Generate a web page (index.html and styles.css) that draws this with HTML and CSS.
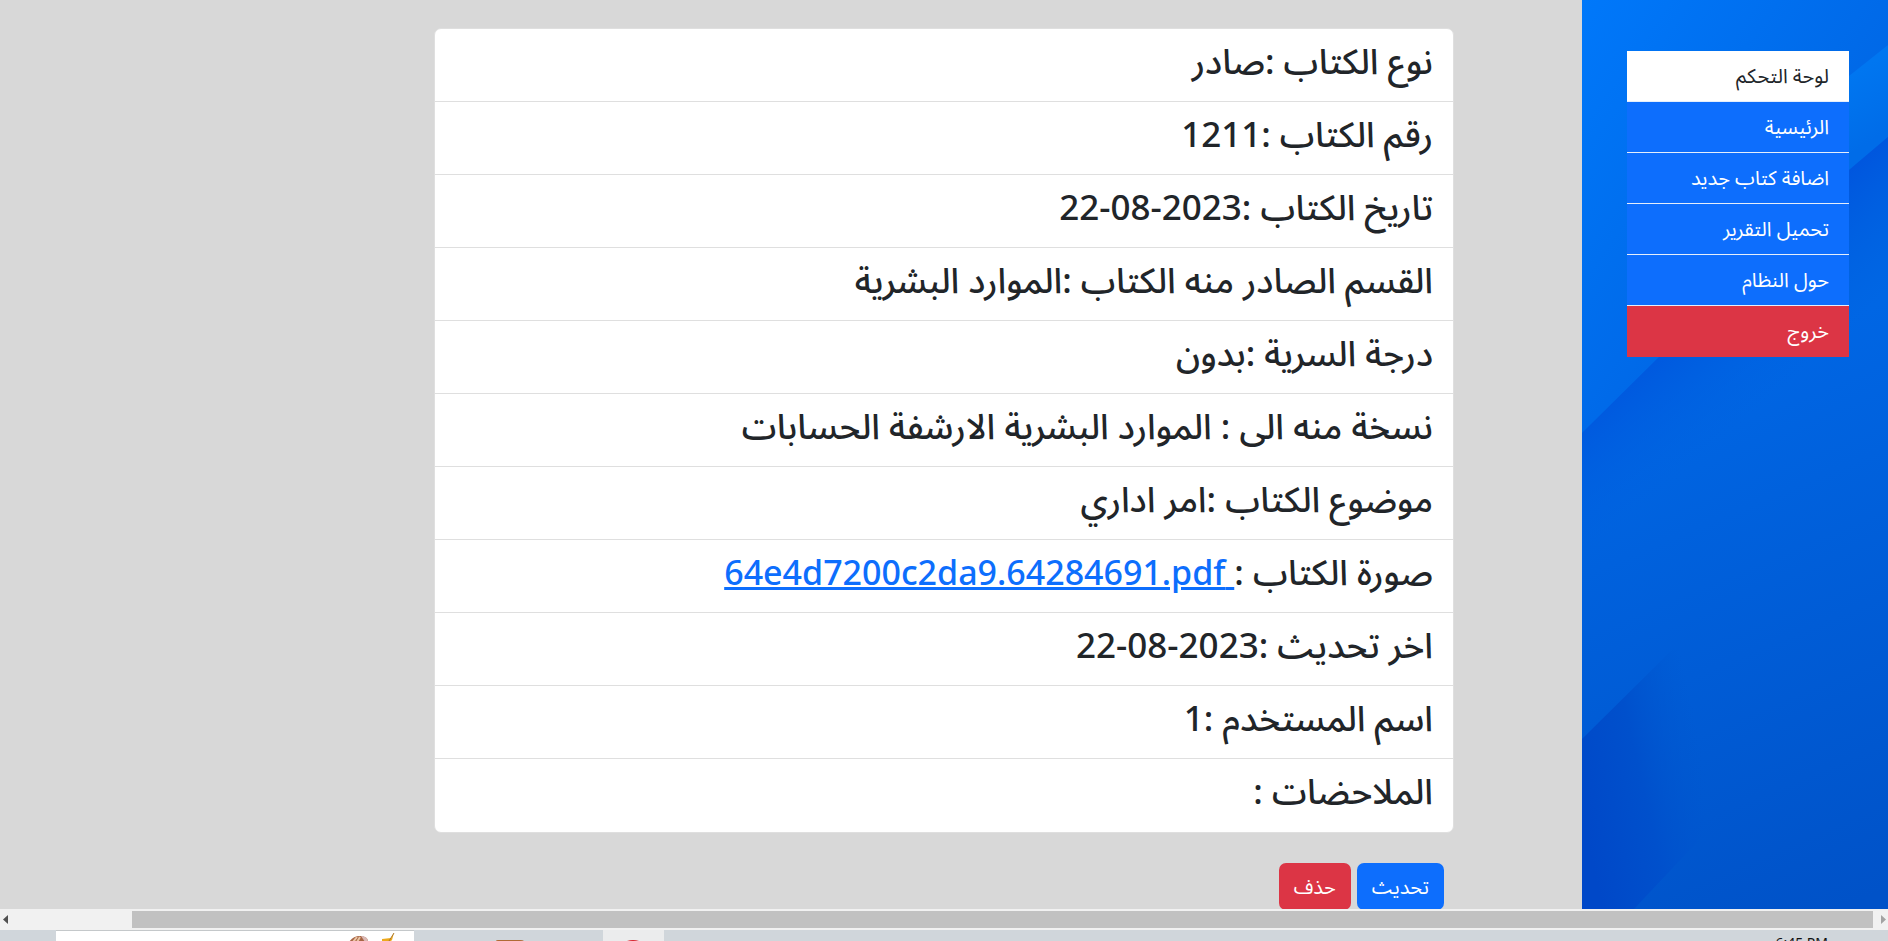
FILE: index.html
```html
<!DOCTYPE html>
<html lang="ar" dir="rtl">
<head>
<meta charset="utf-8">
<title>لوحة التحكم</title>
<link rel="stylesheet" href="styles.css">
</head>
<body>
<div class="page">
  <aside class="sidebar">
    <svg class="sidebar-art" viewBox="0 0 306 909" preserveAspectRatio="none" aria-hidden="true">
      <defs>
        <linearGradient id="upper" x1="0" y1="0" x2="330" y2="230" gradientUnits="userSpaceOnUse">
          <stop offset="0" stop-color="#0078fa"/>
          <stop offset=".8" stop-color="#0066e4"/>
          <stop offset="1" stop-color="#0064e2"/>
        </linearGradient>
        <linearGradient id="lower" x1="20" y1="420" x2="230" y2="920" gradientUnits="userSpaceOnUse">
          <stop offset="0" stop-color="#0066e4"/>
          <stop offset=".5" stop-color="#005cd6"/>
          <stop offset="1" stop-color="#0052c8"/>
        </linearGradient>
        <linearGradient id="beam" x1="270" y1="75" x2="306" y2="130" gradientUnits="userSpaceOnUse">
          <stop offset="0" stop-color="#0076f0"/>
          <stop offset="1" stop-color="#006ce8"/>
        </linearGradient>
        <linearGradient id="fold" x1="130" y1="290" x2="210" y2="380" gradientUnits="userSpaceOnUse">
          <stop offset="0" stop-color="#0056de"/>
          <stop offset="1" stop-color="#0062e0" stop-opacity="0"/>
        </linearGradient>
        <linearGradient id="corner" x1="0" y1="820" x2="130" y2="790" gradientUnits="userSpaceOnUse">
          <stop offset="0" stop-color="#0048c8"/>
          <stop offset=".5" stop-color="#0050cc"/>
          <stop offset="1" stop-color="#0058d0" stop-opacity="0"/>
        </linearGradient>
      </defs>
      <rect width="306" height="909" fill="url(#lower)"/>
      <path d="M0 0H306V137L267 170L78 356L0 433Z" fill="url(#upper)"/>
      <path d="M306 45L267 76V170L306 137Z" fill="url(#beam)"/>
      <path d="M306 137L267 170L78 356L0 433V600H306Z" fill="url(#fold)"/>
      <path d="M0 739L90 650H150V805L52 909H0Z" fill="url(#corner)"/>
    </svg>
    <nav class="menu">
      <h2 class="menu-item menu-title">لوحة التحكم</h2>
      <a class="menu-item" href="#">الرئيسية</a>
      <a class="menu-item" href="#">اضافة كتاب جديد</a>
      <a class="menu-item" href="#">تحميل التقرير</a>
      <a class="menu-item" href="#">حول النظام</a>
      <a class="menu-item menu-exit" href="#">خروج</a>
    </nav>
  </aside>
  <main class="content">
    <ul class="details">
      <li>نوع الكتاب :صادر</li>
      <li>رقم الكتاب :1211</li>
      <li>تاريخ الكتاب :<bdi dir="ltr">22-08-2023</bdi></li>
      <li>القسم الصادر منه الكتاب :الموارد البشرية</li>
      <li>درجة السرية :بدون</li>
      <li>نسخة منه الى : الموارد البشرية الارشفة الحسابات</li>
      <li>موضوع الكتاب :امر اداري</li>
      <li>صورة الكتاب :<a href="#"> <bdi dir="ltr">64e4d7200c2da9.64284691.pdf</bdi></a></li>
      <li>اخر تحديث :<bdi dir="ltr">22-08-2023</bdi></li>
      <li>اسم المستخدم :1</li>
      <li>الملاحضات :</li>
    </ul>
    <div class="actions">
      <button class="btn btn-update" type="button">تحديث</button>
      <button class="btn btn-delete" type="button">حذف</button>
    </div>
  </main>
</div>
<div class="scrollbar" dir="ltr">
  <svg class="arrow" viewBox="0 0 12 21" aria-hidden="true"><path d="M8 6V15L3 10.500Z" fill="#505050"/></svg>
  <div class="thumb"></div>
  <svg class="arrow" viewBox="0 0 12 21" aria-hidden="true"><path d="M5 6V15L10 10.500Z" fill="#a3a3a3"/></svg>
</div>
<footer class="taskbar" dir="ltr">
  <div class="search">
    <svg class="search-art" viewBox="0 0 50 11" aria-hidden="true">
      <path d="M1 11C4 7 7 5 12 5C18 5 20 8 20 11Z" fill="#a86544"/>
      <path d="M5 11L9 6M9 11L12 6" stroke="#e9c5a4" stroke-width="2"/>
      <path d="M13 5C18 5 20 8 20 11H17Z" fill="#d9b8b4"/>
      <path d="M34 8L43 7L46 2L44 9L42 11H34Z" fill="#eda91c"/>
      <path d="M46 2L41 10" stroke="#a8782c" stroke-width="1"/>
    </svg>
  </div>
  <svg class="task" viewBox="0 0 61 11" aria-hidden="true"><path d="M18 11Q18 10 20 10H42Q45 10 46 11Z" fill="#b06a35"/></svg>
  <svg class="task task-active" viewBox="0 0 61 11" aria-hidden="true"><path d="M24 11Q30 9 36 11Z" fill="#d8232e"/></svg>
  <time class="clock">6:45 PM</time>
</footer>
</body>
</html>
```
FILE: styles.css
```css
* { box-sizing: border-box; }

body {
  margin: 0;
  height: 100vh;
  display: flex;
  flex-direction: column;
  overflow: hidden;
  background: #d8d8d8;
  color: #212529;
  font-family: "Segoe UI", "Noto Sans", "Noto Sans Arabic", "DejaVu Sans", sans-serif;
  font-size: 20px;
  line-height: 30px;
}

.page {
  flex: 1;
  min-height: 0;
  display: flex;
}

.sidebar {
  position: relative;
  flex: 0 0 306px;
  padding: 51px 39px 0 45px;
}

.sidebar-art {
  position: absolute;
  inset: 0;
  width: 100%;
  height: 100%;
}

.menu {
  position: relative;
  display: flex;
  flex-direction: column;
}

.menu-item {
  height: 51px;
  margin: 0;
  padding: 10px 20px;
  border-bottom: 1px solid #e4eefc;
  background: #0d6efd;
  color: #fff;
  font-size: 20px;
  font-weight: 400;
  text-decoration: none;
}

.menu-title {
  background: #fff;
  color: #212529;
}

.menu-exit {
  border-bottom: 0;
  background: #dc3545;
}

.content {
  flex: 1;
  padding: 28px 128px 0 434px;
}

.details {
  margin: 0;
  padding: 0;
  list-style: none;
  border: 1px solid #dfdfdf;
  border-radius: 7px;
  background: #fff;
  font-size: 35px;
  font-weight: 500;
  line-height: 52px;
}

.details li {
  height: 73px;
  padding: 6px 20px;
  border-bottom: 1px solid #dfdfdf;
  white-space: nowrap;
}

.details li:last-child { border-bottom: 0; }

.details a {
  color: #0d6efd;
  font-size: 34px;
  text-decoration: underline;
}

.actions {
  display: flex;
  gap: 6px;
  margin-top: 30px;
  padding-right: 10px;
}

.btn {
  height: 47px;
  padding: 0 15px;
  border: 0;
  border-radius: 7px;
  color: #fff;
  font: inherit;
}

.btn-update { background: #0d6efd; }
.btn-delete { background: #dc3545; }

.scrollbar {
  flex: 0 0 21px;
  display: flex;
  background: #f1f1f1;
}

.arrow {
  flex: 0 0 12px;
  height: 21px;
}

.thumb {
  flex: 1;
  margin: 2px 3px 2px 120px;
  background: #c1c1c1;
}

.taskbar {
  flex: 0 0 11px;
  display: flex;
  overflow: hidden;
  padding: 0 60px 0 56px;
  background: #d0d6db;
}

.search {
  width: 358px;
  border-top: 1px solid #c4c8ca;
  background: #fff;
  display: flex;
  justify-content: flex-end;
  padding-right: 16px;
}

.search-art {
  width: 50px;
  height: 11px;
}

.task {
  width: 61px;
  height: 11px;
  margin-left: 64px;
}

.task-active { background: #ebeced; }

.clock {
  margin-left: auto;
  color: #111;
  font-size: 14px;
  line-height: 26px;
}
```
